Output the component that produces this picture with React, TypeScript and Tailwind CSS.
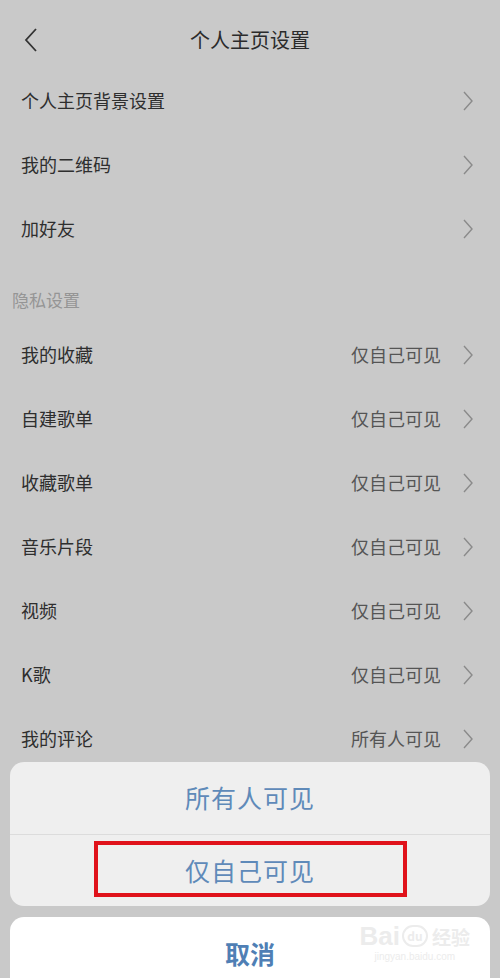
import React from 'react'

const font = { fontFamily: '"Noto Sans CJK SC", "Noto Sans", sans-serif' }

function Chevron() {
  return (
    <svg width="12" height="22" viewBox="0 0 12 22" className="shrink-0">
      <path d="M2 2 L10 11 L2 20" fill="none" stroke="#8a8a8a" strokeWidth="1.4" />
    </svg>
  )
}

function Row({ label, value }: { label: string; value?: string }) {
  return (
    <div className="h-[64px] flex items-center pl-[21px] pr-[26px] pb-[1px]">
      <span className="text-[18px] text-[#2e2e2e] flex-1">{label}</span>
      {value && <span className="text-[18px] text-[#555] mr-[21px]">{value}</span>}
      <Chevron />
    </div>
  )
}

const privacy = [
  ['我的收藏', '仅自己可见'],
  ['自建歌单', '仅自己可见'],
  ['收藏歌单', '仅自己可见'],
  ['音乐片段', '仅自己可见'],
  ['视频', '仅自己可见'],
  ['K歌', '仅自己可见'],
  ['我的评论', '所有人可见'],
]

export default function App() {
  return (
    <div className="w-[500px] h-[978px] bg-[#c9c9c9] relative overflow-hidden" style={font}>
      {/* Header */}
      <div className="h-[69px] flex items-center relative pt-[11px]">
        <svg width="16" height="26" viewBox="0 0 16 26" className="absolute left-[23px] top-[27px]">
          <path d="M13 2 L3 13 L13 24" fill="none" stroke="#333" strokeWidth="1.8" />
        </svg>
        <span className="w-full text-center text-[20px] text-[#2b2b2b]">个人主页设置</span>
      </div>

      <Row label="个人主页背景设置" />
      <Row label="我的二维码" />
      <Row label="加好友" />

      <div className="h-[62px] flex items-center pt-[16px] pl-[12px]">
        <span className="text-[17px] text-[#959595]">隐私设置</span>
      </div>

      {privacy.map(([l, v]) => (
        <Row key={l} label={l} value={v} />
      ))}

      {/* Action sheet */}
      <div className="absolute left-[10px] right-[10px] top-[762px] flex flex-col gap-[11px]">
        <div className="bg-[#efefef] rounded-[14px] flex flex-col">
          <div className="h-[73px] flex items-center justify-center border-b border-[#dcdcdc]">
            <span className="text-[25px] text-[#5f8ab9] tracking-[1px]">所有人可见</span>
          </div>
          <div className="h-[71px] flex items-center justify-center relative">
            <span className="text-[25px] text-[#5f8ab9] tracking-[1px]">仅自己可见</span>
            <div className="absolute left-[84px] top-[6px] w-[313px] h-[56px] border-[4px] border-[#e0121b]" />
          </div>
        </div>
        <div className="bg-white rounded-[14px] h-[80px] flex items-start justify-center pt-[18px] relative">
          <span className="text-[25px] font-bold text-[#4f7fb5]">取消</span>
          <div className="absolute right-[20px] top-[6px] flex flex-col items-center text-[#ececec] leading-none">
            <div className="flex items-center gap-[2px]">
              <span className="text-[26px] font-bold" style={{ fontFamily: '"Liberation Sans", sans-serif' }}>Bai</span>
              <span className="w-[26px] h-[22px] rounded-full border-2 border-[#ececec] text-[12px] flex items-center justify-center font-bold">du</span>
              <span className="text-[19px] font-bold ml-[2px]">经验</span>
            </div>
            <span className="text-[10px] mt-[3px]" style={{ fontFamily: '"Liberation Sans", sans-serif' }}>jingyan.baidu.com</span>
          </div>
        </div>
      </div>
    </div>
  )
}
